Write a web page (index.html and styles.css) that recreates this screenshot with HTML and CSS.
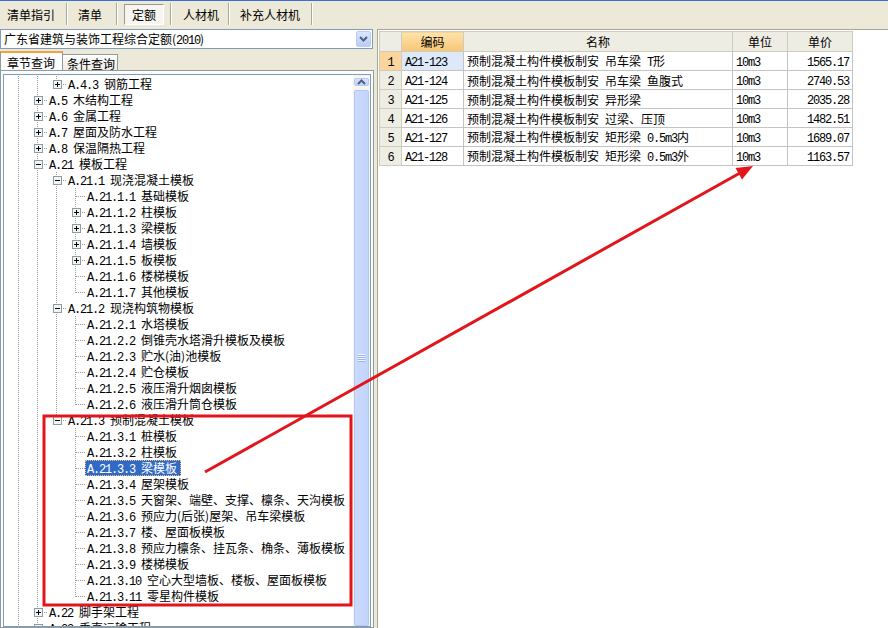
FILE: index.html
```html
<!DOCTYPE html>
<html lang="zh-CN">
<head>
    <meta charset="UTF-8">
    <title>定额查询</title>
    <link rel="stylesheet" href="styles.css">
</head>
<body>
    <svg class="defs" width="0" height="0">
        <symbol id="plus" viewBox="0 0 9 9">
            <rect x="0.5" y="0.5" width="8" height="8" fill="#f4f4f0" stroke="#8d9aa7"/>
            <path d="M2 4.5h5M4.5 2v5" stroke="#000"/>
        </symbol>
        <symbol id="minus" viewBox="0 0 9 9">
            <rect x="0.5" y="0.5" width="8" height="8" fill="#f4f4f0" stroke="#8d9aa7"/>
            <path d="M2 4.5h5" stroke="#000"/>
        </symbol>
    </svg>

    <!-- Top toolbar -->
    <div class="toolbar">
        <div class="tb-tab t1">清单指引</div>
        <div class="tb-tab t2">清单</div>
        <div class="tb-tab t3"><span class="pressed">定额</span></div>
        <div class="tb-tab t4">人材机</div>
        <div class="tb-tab t5">补充人材机</div>
    </div>

    <div class="main">
        <!-- Left: quota book tree -->
        <div class="left-pane">
            <div class="combo">
                <span class="combo-text">广东省建筑与装饰工程综合定额(<span class="code">2010</span>)</span>
                <span class="combo-btn">
                    <svg width="9" height="6" viewBox="0 0 9 6"><path d="M1 1l3.5 3.5L8 1" fill="none" stroke="#4d6185" stroke-width="2"/></svg>
                </span>
            </div>

            <div class="qtabs">
                <div class="qtab active">章节查询</div>
                <div class="qtab">条件查询</div>
            </div>

            <div class="tab-page">
                <div class="tree-box">
                    <div class="tree" id="tree"></div>
                    <div class="vscroll">
                        <div class="sb-btn">
                            <svg width="9" height="6" viewBox="0 0 9 6"><path d="M1 5l3.5-3.5L8 5" fill="none" stroke="#4d6185" stroke-width="2"/></svg>
                        </div>
                        <div class="sb-track"></div>
                        <div class="sb-thumb"><span class="grip"></span></div>
                    </div>
                </div>
            </div>
        </div>

        <!-- Right: quota items -->
        <div class="right-pane">
            <table class="grid">
                <colgroup>
                    <col style="width:22px">
                    <col style="width:62px">
                    <col style="width:269px">
                    <col style="width:55px">
                    <col style="width:65px">
                </colgroup>
                <thead>
                    <tr>
                        <th></th>
                        <th class="hl">编码</th>
                        <th>名称</th>
                        <th>单位</th>
                        <th>单价</th>
                    </tr>
                </thead>
                <tbody id="rows"></tbody>
            </table>
        </div>
    </div>

    <!-- Red annotation -->
    <svg class="annot" width="888" height="628" viewBox="0 0 888 628">
        <rect x="44" y="416" width="307" height="189" fill="none" stroke="#e3151c" stroke-width="3"/>
        <line x1="205" y1="472" x2="740" y2="173" stroke="#e3151c" stroke-width="3"/>
        <polygon points="753,166 742,179.5 735.5,168" fill="#e3151c"/>
    </svg>

    <script>
        // tree rows: guides (v = line, t = tee, l = elbow, e = empty), toggle, code, name
        const nodes = [
            ['v v l', 'plus', 'A.4.3', '钢筋工程'],
            ['v t', 'plus', 'A.5', '木结构工程'],
            ['v t', 'plus', 'A.6', '金属工程'],
            ['v t', 'plus', 'A.7', '屋面及防水工程'],
            ['v t', 'plus', 'A.8', '保温隔热工程'],
            ['v t', 'minus', 'A.21', '模板工程'],
            ['v v t', 'minus', 'A.21.1', '现浇混凝土模板'],
            ['v v v t', '', 'A.21.1.1', '基础模板'],
            ['v v v t', 'plus', 'A.21.1.2', '柱模板'],
            ['v v v t', 'plus', 'A.21.1.3', '梁模板'],
            ['v v v t', 'plus', 'A.21.1.4', '墙模板'],
            ['v v v t', 'plus', 'A.21.1.5', '板模板'],
            ['v v v t', '', 'A.21.1.6', '楼梯模板'],
            ['v v v l', '', 'A.21.1.7', '其他模板'],
            ['v v t', 'minus', 'A.21.2', '现浇构筑物模板'],
            ['v v v t', '', 'A.21.2.1', '水塔模板'],
            ['v v v t', '', 'A.21.2.2', '倒锥壳水塔滑升模板及模板'],
            ['v v v t', '', 'A.21.2.3', '贮水(油)池模板'],
            ['v v v t', '', 'A.21.2.4', '贮仓模板'],
            ['v v v t', '', 'A.21.2.5', '液压滑升烟囱模板'],
            ['v v v l', '', 'A.21.2.6', '液压滑升筒仓模板'],
            ['v v l', 'minus', 'A.21.3', '预制混凝土模板'],
            ['v v e t', '', 'A.21.3.1', '桩模板'],
            ['v v e t', '', 'A.21.3.2', '柱模板'],
            ['v v e t', '', 'A.21.3.3', '梁模板', true],
            ['v v e t', '', 'A.21.3.4', '屋架模板'],
            ['v v e t', '', 'A.21.3.5', '天窗架、端壁、支撑、檩条、天沟模板'],
            ['v v e t', '', 'A.21.3.6', '预应力(后张)屋架、吊车梁模板'],
            ['v v e t', '', 'A.21.3.7', '楼、屋面板模板'],
            ['v v e t', '', 'A.21.3.8', '预应力檩条、挂瓦条、桷条、薄板模板'],
            ['v v e t', '', 'A.21.3.9', '楼梯模板'],
            ['v v e t', '', 'A.21.3.10', '空心大型墙板、楼板、屋面板模板'],
            ['v v e l', '', 'A.21.3.11', '零星构件模板'],
            ['v t', 'plus', 'A.22', '脚手架工程'],
            ['v t', 'plus', 'A.23', '垂直运输工程']
        ];

        const tree = document.getElementById('tree');
        tree.innerHTML = nodes.map(([guides, tog, code, name, sel]) => {
            const g = guides.split(' ');
            const cells = g.map((k, i) => {
                const box = (i === g.length - 1 && tog)
                    ? `<svg class="tog" width="9" height="9"><use href="#${tog}"/></svg>` : '';
                return `<span class="g ${k}">${box}</span>`;
            }).join('');
            return `<div class="node">${cells}<span class="lbl${sel ? ' sel' : ''}"><span class="code">${code} </span>${name}</span></div>`;
        }).join('');

        // quota items
        const items = [
            ['A21-123', '预制混凝土构件模板制安&ensp;吊车梁&ensp;<span class="code">T</span>形', '1565.17'],
            ['A21-124', '预制混凝土构件模板制安&ensp;吊车梁&ensp;鱼腹式', '2740.53'],
            ['A21-125', '预制混凝土构件模板制安&ensp;异形梁', '2035.28'],
            ['A21-126', '预制混凝土构件模板制安&ensp;过梁、压顶', '1482.51'],
            ['A21-127', '预制混凝土构件模板制安&ensp;矩形梁&ensp;<span class="code">0.5m3</span>内', '1689.07'],
            ['A21-128', '预制混凝土构件模板制安&ensp;矩形梁&ensp;<span class="code">0.5m3</span>外', '1163.57']
        ];

        document.getElementById('rows').innerHTML = items.map(([code, name, price], i) => `
            <tr>
                <td class="num${i === 0 ? ' hl' : ''}"><span class="code">${i + 1}</span></td>
                <td class="${i === 0 ? 'focus' : ''}"><span class="code">${code}</span></td>
                <td>${name}</td>
                <td><span class="code">10m3</span></td>
                <td class="price"><span class="code">${price}</span></td>
            </tr>`).join('');
    </script>
</body>
</html>
```

FILE: styles.css
```css
* {
    margin: 0;
    padding: 0;
    box-sizing: border-box;
}

body {
    width: 888px;
    height: 628px;
    overflow: hidden;
    background: #ece9d8;
    font-family: "Noto Sans CJK SC", "Liberation Sans", sans-serif;
    font-size: 12px;
    color: #000;
    position: relative;
}

.defs {
    position: absolute;
}

/* half-width ascii, like SimSun */
.code {
    font-family: "Liberation Mono", "Noto Sans CJK SC", monospace;
    letter-spacing: -1.2px;
    white-space: pre;
}

/* Toolbar */
.toolbar {
    height: 28px;
    border-top: 1px solid #3c6fd6;
    display: flex;
    align-items: stretch;
    padding: 2px 0 3px;
}

.tb-tab {
    display: flex;
    align-items: center;
    border-right: 1px solid #aca899;
    box-shadow: 1px 0 0 #fff;
    margin-right: 1px;
    white-space: nowrap;
}

.t1 { padding: 0 11px 0 7px; }
.t2 { padding: 0 14px 0 10px; }
.t3 { padding: 0 6px; }
.t4 { padding: 0 9px 0 11px; }
.t5 { padding: 0 11px 0 10px; }

.pressed {
    display: flex;
    align-items: center;
    height: 21px;
    padding: 0 7px;
    border: 1px solid;
    border-color: #9d9a8a #fff #fff #9d9a8a;
    background: #f6f5ef;
}

/* Main area */
.main {
    display: flex;
    gap: 3px;
    height: 600px;
}

.left-pane {
    width: 374px;
    display: flex;
    flex-direction: column;
    padding-top: 1px;
}

.combo {
    height: 20px;
    border: 1px solid #7f9db9;
    background: #fff;
    display: flex;
    align-items: center;
    justify-content: space-between;
    padding: 0 1px 0 3px;
    margin-right: 1px;
}

.combo-btn {
    width: 15px;
    height: 16px;
    border: 1px solid #b9cbf6;
    border-radius: 2px;
    background: linear-gradient(#dbe5fd, #b9cdf8);
    display: flex;
    align-items: center;
    justify-content: center;
}

.qtabs {
    display: flex;
    align-items: flex-end;
    height: 21px;
    margin-top: 1px;
    margin-bottom: -1px;
}

.qtab {
    height: 17px;
    padding: 0 2px 0 4px;
    display: flex;
    align-items: center;
    border: 1px solid #919b9c;
    border-left: none;
    border-bottom: none;
    background: linear-gradient(#fefefe, #ecebe4);
}

.qtab.active {
    height: 20px;
    padding: 0 7px 0 6px;
    border-left: 1px solid #919b9c;
    border-top: 2px solid #f0a33c;
    background: #fcfcfe;
}

.tab-page {
    flex: 1;
    border: 1px solid #919b9c;
    background: #fcfcfe;
    padding: 3px 2px 0;
    min-height: 0;
}

.tree-box {
    height: 100%;
    border: 1px solid #7f9db9;
    background: #fff;
    display: flex;
    overflow: hidden;
}

/* Tree */
.tree {
    flex: 1;
    padding: 1px 0 0 5px;
}

.node {
    display: flex;
    height: 16px;
    line-height: 16px;
    white-space: nowrap;
}

.g {
    flex: none;
    width: 19px;
    height: 16px;
    display: flex;
    align-items: center;
    justify-content: center;
}

.g.v {
    background: repeating-linear-gradient(#9a9a9a 0 1px, transparent 1px 2px) 9px 0 / 1px 16px no-repeat;
}

.g.t {
    background:
        repeating-linear-gradient(#9a9a9a 0 1px, transparent 1px 2px) 9px 0 / 1px 16px no-repeat,
        repeating-linear-gradient(90deg, #9a9a9a 0 1px, transparent 1px 2px) 10px 8px / 9px 1px no-repeat;
}

.g.l {
    background:
        repeating-linear-gradient(#9a9a9a 0 1px, transparent 1px 2px) 9px 0 / 1px 9px no-repeat,
        repeating-linear-gradient(90deg, #9a9a9a 0 1px, transparent 1px 2px) 10px 8px / 9px 1px no-repeat;
}

.tog {
    display: block;
    margin-left: 1px;
}

.lbl {
    padding: 0 4px 0 2px;
}

.lbl.sel {
    background: #316ac5;
    color: #fff;
    outline: 1px dotted #f0c080;
    outline-offset: -1px;
}

/* Scrollbar */
.vscroll {
    flex: none;
    width: 17px;
    background: #f6f5f0;
    display: flex;
    flex-direction: column;
    padding: 3px 1px 0;
}

.sb-btn {
    height: 15px;
    border: 1px solid #b6c9f5;
    border-radius: 2px;
    background: linear-gradient(#d9e4fd, #c0d2fa);
    display: flex;
    align-items: center;
    justify-content: center;
}

.sb-track {
    height: 156px;
}

.sb-thumb {
    flex: none;
    height: 536px;
    border: 1px solid #b4c8f6;
    border-radius: 2px;
    background: linear-gradient(90deg, #cbdafd, #c3d4fc);
    display: flex;
    align-items: center;
    justify-content: center;
}

.grip {
    width: 7px;
    height: 8px;
    background: repeating-linear-gradient(#eef3fe 0 1px, #9db4e8 1px 2px);
}

/* Right pane */
.right-pane {
    flex: 1;
    margin-top: 1px;
    border-top: 1px solid #a7a596;
    border-left: 1px solid #a7a596;
    background: #fff;
    padding: 1px;
}

.grid {
    border-collapse: collapse;
    table-layout: fixed;
    width: 473px;
}

.grid th,
.grid td {
    border: 1px solid #c3c3c3;
    white-space: nowrap;
    overflow: hidden;
}

.grid th {
    height: 20px;
    font-weight: normal;
    background: #eeede4;
    border-color: #cfccbd;
}

.grid th.hl {
    background: linear-gradient(#fde3ae, #f7c774);
}

.grid td {
    height: 19px;
    padding: 0 3px;
}

.grid td.num {
    text-align: center;
    background: #eeede4;
    border-color: #cfccbd;
}

.grid td.num.hl {
    background: #fbd59c;
}

.grid td.focus {
    background: #dde9f8;
}

.grid td.price {
    text-align: right;
}

/* Annotation overlay */
.annot {
    position: absolute;
    top: 0;
    left: 0;
    pointer-events: none;
}
```
